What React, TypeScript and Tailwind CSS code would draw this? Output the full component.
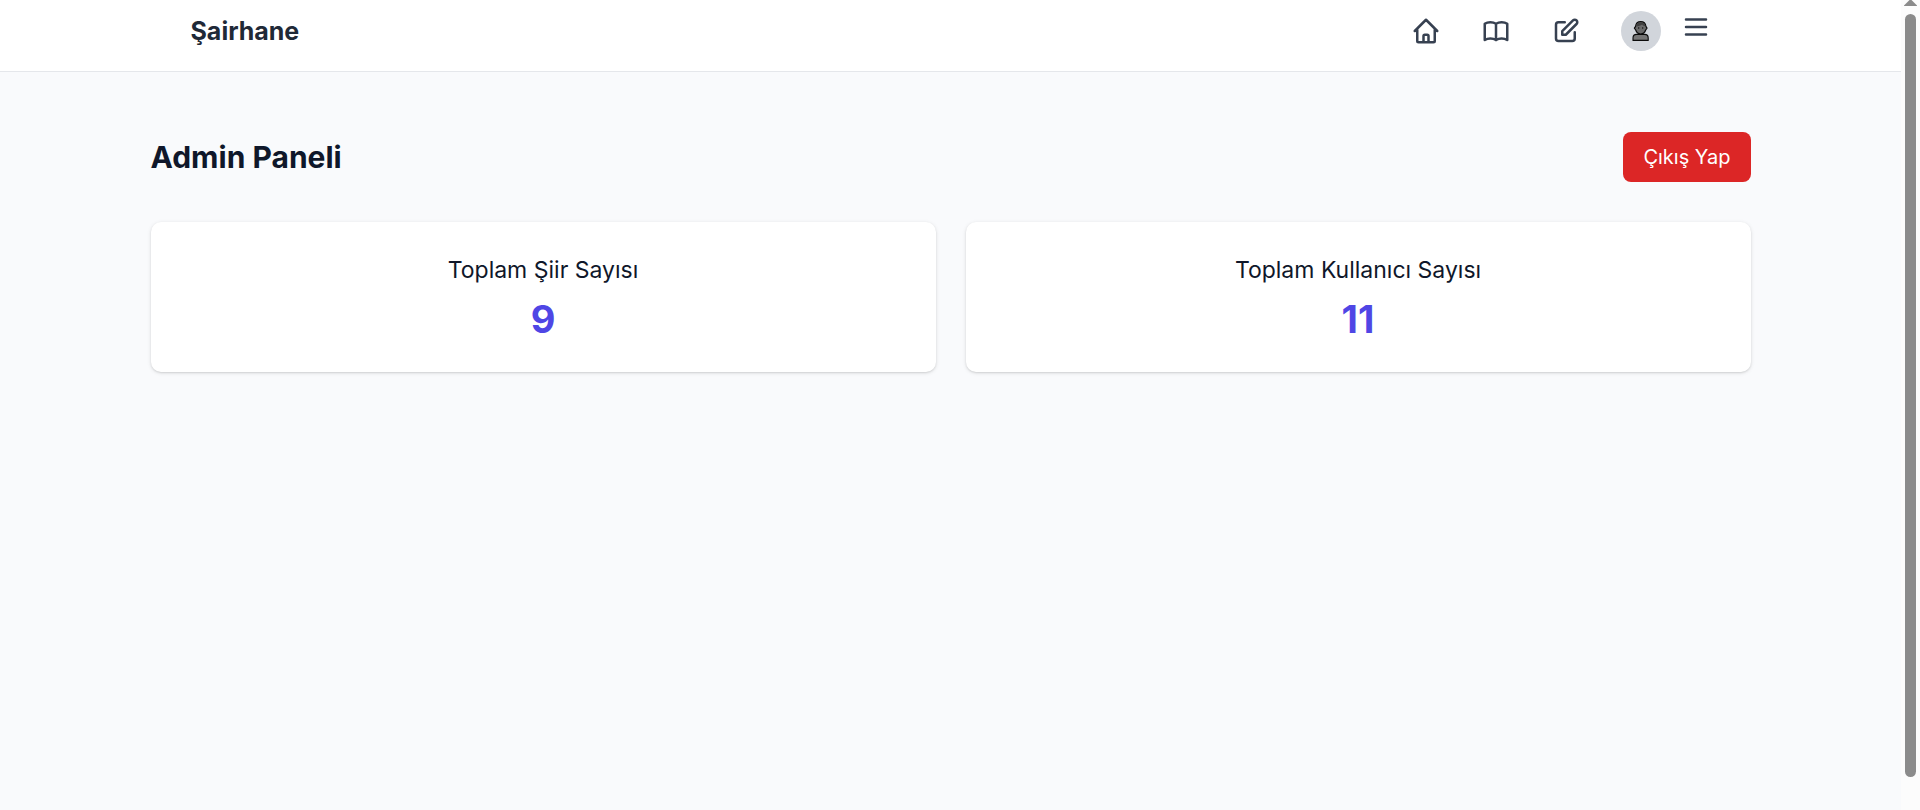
import React from "react";

type IconProps = { d: string };

function Icon({ d }: IconProps) {
  return (
    <svg
      className="h-[30px] w-[30px]"
      viewBox="0 0 24 24"
      fill="none"
      stroke="currentColor"
      strokeWidth={2}
      strokeLinecap="round"
      strokeLinejoin="round"
      aria-hidden="true"
    >
      <path d={d} />
    </svg>
  );
}

const navItems = [
  {
    label: "Ana Sayfa",
    d: "M3 12l2-2m0 0l7-7 7 7M5 10v10a1 1 0 001 1h3m10-11l2 2m-2-2v10a1 1 0 01-1 1h-3m-6 0a1 1 0 001-1v-4a1 1 0 011-1h2a1 1 0 011 1v4a1 1 0 001 1m-6 0h6",
  },
  {
    label: "Şiirler",
    d: "M12 6.253v13m0-13C10.832 5.477 9.246 5 7.5 5S4.168 5.477 3 6.253v13C4.168 18.477 5.754 18 7.5 18s3.332.477 4.5 1.253m0-13C13.168 5.477 14.754 5 16.5 5c1.747 0 3.332.477 4.5 1.253v13C19.832 18.477 18.247 18 16.5 18c-1.746 0-3.332.477-4.5 1.253",
  },
  {
    label: "Şiir Yaz",
    d: "M11 5H6a2 2 0 00-2 2v11a2 2 0 002 2h11a2 2 0 002-2v-5m-1.414-9.414a2 2 0 112.828 2.828L11.828 15H9v-2.828l8.586-8.586z",
  },
];

const stats = [
  { label: "Toplam Şiir Sayısı", value: 9 },
  { label: "Toplam Kullanıcı Sayısı", value: 11 },
];

function Avatar() {
  return (
    <svg className="h-5 w-[18px]" viewBox="0 0 18 20" aria-hidden="true">
      <path
        d="M1 19.400V17c0-2.300 1.400-3.600 3.600-3.600h8c2.200 0 3.600 1.300 3.600 3.600v2.400z"
        fill="#757575"
        stroke="#0a0a0a"
        strokeWidth="1.100"
        strokeLinejoin="round"
      />
      <path
        d="M8.700.7c3.200 0 4.900 1.900 5.200 4.600l1.100 1.800-1.300 1.900c-.8 2.300-2.600 4-5 4s-4.200-1.700-5-4L2.400 7.100l1.200-1.800C3.900 2.600 5.500.7 8.700.7z"
        fill="#6b6b6b"
        stroke="#0a0a0a"
        strokeWidth="1.200"
        strokeLinejoin="round"
      />
      <path d="M4 5.200C4.300 2.700 6 1.200 8.700 1.200s4.500 1.500 4.800 4c-1.500-.2-2.700-.8-3.400-1.800C8.500 4.600 6.200 5.300 4 5.200z" fill="#3f3f3f" />
      <circle cx="6.700" cy="7" r=".7" fill="#111" />
      <circle cx="10.700" cy="7" r=".7" fill="#111" />
    </svg>
  );
}

function Header() {
  return (
    <header className="border-b border-[#e5e7eb] bg-white pt-[11px] pb-5">
      <div className="mx-auto flex h-10 max-w-[1600px] items-center justify-between px-10">
        <a href="#" className="text-[25px] leading-10 font-bold text-[#1f2937]">
          Şairhane
        </a>
        <nav className="flex items-center gap-10 text-[#374151]">
          {navItems.map((item) => (
            <a key={item.label} href="#" aria-label={item.label}>
              <Icon d={item.d} />
            </a>
          ))}
          <div className="flex items-start gap-5">
            <a
              href="#"
              aria-label="Profil"
              className="flex h-10 w-10 items-center justify-center rounded-full bg-[#d1d5db]"
            >
              <Avatar />
            </a>
            <button type="button" aria-label="Menü" className="pt-px">
              <Icon d="M4 6h16M4 12h16M4 18h16" />
            </button>
          </div>
        </nav>
      </div>
    </header>
  );
}

function Scrollbar() {
  return (
    <div className="flex h-screen w-[19px] shrink-0 flex-col items-center gap-2 bg-[#fcfcfc] pb-[33px]" aria-hidden="true">
      <svg className="h-1.5 w-[13px] shrink-0" viewBox="0 0 13 6">
        <path d="M5.500 0h2L13 5.500V6H0v-.5z" fill="#8b8b8b" />
      </svg>
      <div className="w-[11px] grow rounded-full bg-[#8b8b8b]" />
    </div>
  );
}

export default function App() {
  return (
    <div className="flex min-h-screen bg-[#f9fafc] font-[Inter,sans-serif] text-[#0f172a]">
      <div className="min-w-0 grow">
        <Header />
        <main className="mx-auto max-w-[1600px] pt-[60px]">
          <div className="mb-10 flex items-center justify-between">
            <h1 className="text-3xl leading-10 font-bold">Admin Paneli</h1>
            <button type="button" className="rounded-lg bg-[#dc2626] px-5 py-2.5 text-xl leading-[30px] text-white">
              Çıkış Yap
            </button>
          </div>
          <div className="grid grid-cols-2 gap-[30px]">
            {stats.map((stat) => (
              <section
                key={stat.label}
                className="rounded-[10px] bg-white p-[30px] text-center shadow-[0_1px_4px_rgba(0,0,0,0.1),0_1px_2px_rgba(0,0,0,0.1)]"
              >
                <h2 className="mb-2 text-[23px] leading-[37px] font-normal">{stat.label}</h2>
                <p className="text-[38px] leading-[45px] font-bold text-[#4f46e5]">{stat.value}</p>
              </section>
            ))}
          </div>
        </main>
      </div>
      <Scrollbar />
    </div>
  );
}
